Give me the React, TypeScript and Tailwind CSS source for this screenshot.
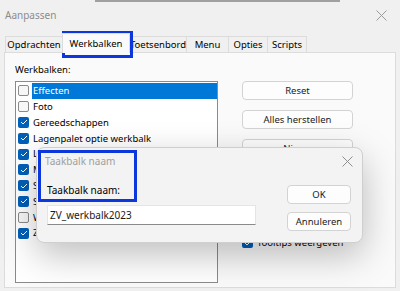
import React from 'react';

const items = [
  { name: 'Effecten', checked: false, selected: true },
  { name: 'Foto', checked: false },
  { name: 'Gereedschappen', checked: true },
  { name: 'Lagenpalet optie werkbalk', checked: true },
  { name: 'Lagenpalet', checked: true },
  { name: 'Menubalk', checked: true },
  { name: 'Selectie', checked: true },
  { name: 'Standaard', checked: true },
  { name: 'Werkset', checked: false },
  { name: 'Zoomen', checked: true },
];

const tabs = [
  { label: 'Opdrachten', w: 'w-[58px]' },
  { label: 'Werkbalken', w: 'w-[68px]' },
  { label: 'Toetsenbord', w: 'w-[58px]' },
  { label: 'Menu', w: 'w-[43px]' },
  { label: 'Opties', w: 'w-[40px]' },
  { label: 'Scripts', w: 'w-[40px]' },
];

const CloseIcon = ({ className }: { className?: string }) => (
  <svg width="11" height="11" viewBox="0 0 11 11" className={className}>
    <path d="M0.5 0.5 L10.5 10.5 M10.5 0.5 L0.5 10.5" stroke="currentColor" strokeWidth="1" />
  </svg>
);

const Checkbox = ({ checked }: { checked: boolean }) =>
  checked ? (
    <span className="w-[11px] h-[11px] rounded-[2px] bg-[#005fb8] flex items-center justify-center shrink-0">
      <svg width="8" height="6" viewBox="0 0 8 6">
        <path d="M1 3 L3 5 L7 1" fill="none" stroke="#fff" strokeWidth="1" />
      </svg>
    </span>
  ) : (
    <span className="w-[11px] h-[11px] rounded-[2px] border border-[#8a8a8a] bg-[#f7f7f7] shrink-0" />
  );

const Button = ({ label }: { label: string }) => (
  <div className="h-[19px] rounded-[4px] border border-[#d3d3d3] bg-[#fdfdfd] flex items-center justify-center text-[#1a1a1a]">
    {label}
  </div>
);

export default function App() {
  return (
    <div className="relative w-[400px] h-[291px] overflow-hidden bg-[#f0f0f0] text-[9.5px] text-black font-['Noto_Sans',sans-serif] leading-none">
      <div className="h-[2px] ml-[95px] w-[245px] bg-[#a0a0a0]" />

      {/* Title bar */}
      <div className="h-[26px] flex items-center justify-between pl-[5px] pr-[13px]">
        <span className="text-[#8c8c8c] text-[10px]">Aanpassen</span>
        <CloseIcon className="text-[#9a9a9a]" />
      </div>

      {/* Tabs */}
      <div className="h-[24px] flex items-end pl-[5px]">
        {tabs.map((t, i) =>
          i === 1 ? (
            <div key={t.label} className={t.w + ' h-[20px] -mb-px -ml-px bg-[#fafafa] border border-b-0 border-[#dcdcdc] flex items-center justify-center relative z-10'}>
              {t.label}
            </div>
          ) : (
            <div key={t.label} className={t.w + ' h-[16px] bg-[#f0f0f0] border border-b-0 border-[#dcdcdc] flex items-center justify-center -ml-px first:ml-0'}>
              {t.label}
            </div>
          )
        )}
      </div>

      {/* Panel */}
      <div className="mx-[4px] h-[236px] border border-[#dcdcdc] bg-[#fafafa] flex pl-[10px] pt-[12px]">
        <div className="w-[203px] flex flex-col">
          <div className="h-[16px]">Werkbalken:</div>
          <div className="h-[202px] border border-[#8a8a8a] bg-white pl-[2px] pt-px">
            {items.map((it) => (
              <div key={it.name} className="h-[15.8px] flex items-center">
                <Checkbox checked={it.checked} />
                <span
                  className={
                    'ml-[3px] h-full flex items-center pl-px flex-1 whitespace-nowrap ' +
                    (it.selected ? 'bg-[#0078d7] text-white' : '')
                  }
                >
                  {it.name}
                </span>
              </div>
            ))}
          </div>
        </div>
        <div className="ml-[24px] w-[111px] flex flex-col gap-[10px] pt-[16px]">
          <Button label="Reset" />
          <Button label="Alles herstellen" />
          <Button label="Nieuw" />
          <div className="mt-[69px] flex items-center gap-[4px]">
            <Checkbox checked />
            <span className="whitespace-nowrap">Tooltips weergeven</span>
          </div>
        </div>
      </div>

      {/* Highlight around selected tab */}
      <div className="absolute left-[62px] top-[31px] w-[71px] h-[27px] border-[3px] border-[#0b37dd]" />

      {/* Dialog */}
      <div className="absolute left-[36px] top-[147px] w-[327px] h-[96px] rounded-[8px] bg-[#f3f3f3] border border-[#cfcfcf] shadow-[0_12px_36px_rgba(0,0,0,0.26)] flex flex-col text-[10px]">
        <div className="h-[24px] flex items-center justify-between pl-[8px] pr-[9px] pt-[2px]">
          <span className="text-[#a0a0a0]">Taakbalk naam</span>
          <CloseIcon className="text-[#8e8e8e]" />
        </div>
        <div className="flex pl-[10px] pr-[11px]">
          <div className="w-[209px] flex flex-col">
            <div className="mt-[13px] h-[14px]">Taakbalk naam:</div>
            <div className="mt-[6px] h-[20px] bg-white border border-[#e5e5e5] border-b-[#8a8a8a] flex items-center pl-[2px] text-[#1a1a1a]">
              ZV_werkbalk2023
            </div>
          </div>
          <div className="ml-auto w-[64px] flex flex-col gap-[8px] mt-[13px] text-[9.5px]">
            <Button label="OK" />
            <Button label="Annuleren" />
          </div>
        </div>
        {/* Highlight around dialog title */}
        <div className="absolute left-[1px] top-[2px] w-[99px] h-[52px] border-[3px] border-[#0b37dd]" />
      </div>
    </div>
  );
}
